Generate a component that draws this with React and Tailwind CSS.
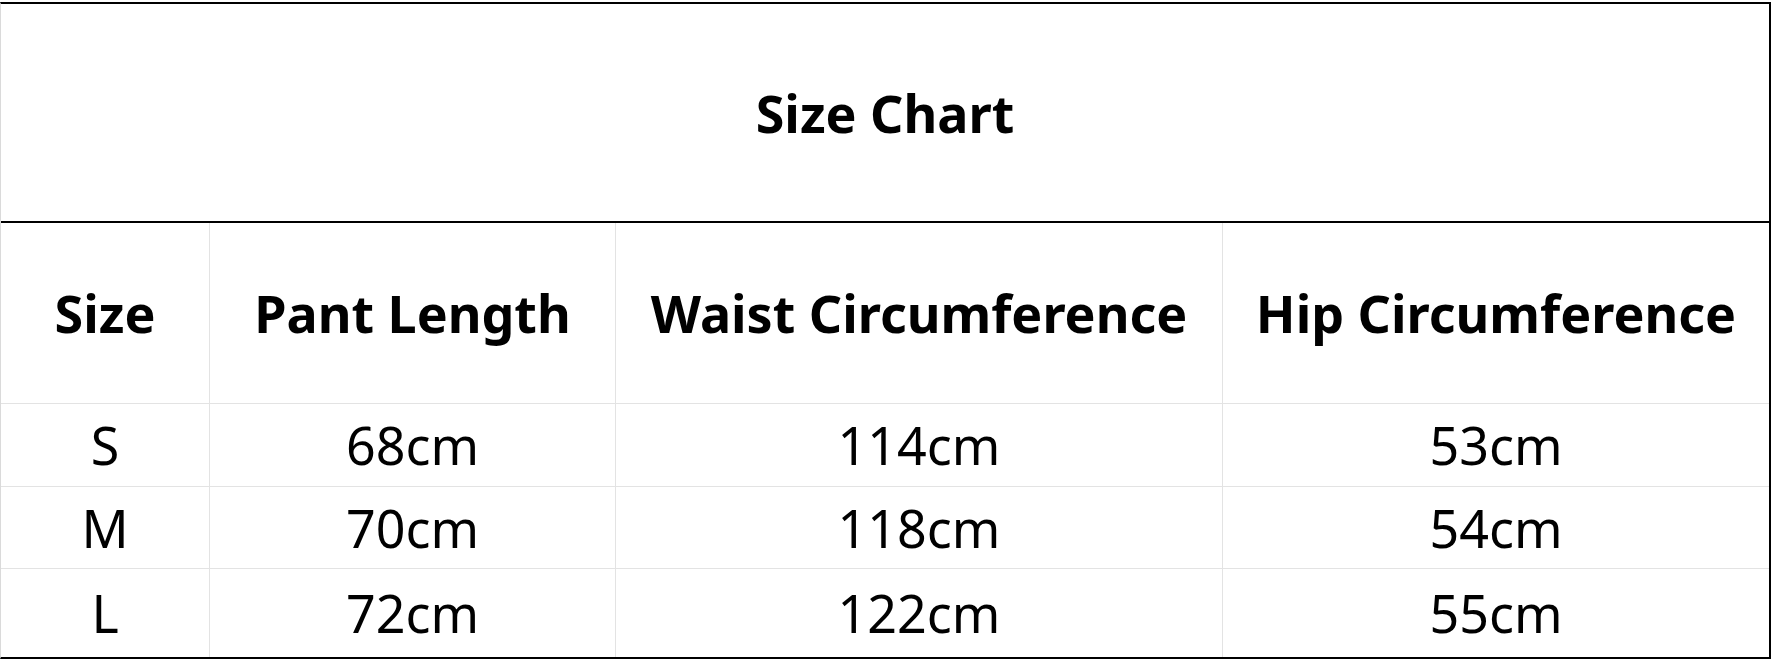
import React from "react";

const columns = ["Size", "Pant Length", "Waist Circumference", "Hip Circumference"];

const rows = [
    { size: "S", pant: "68cm", waist: "114cm", hip: "53cm", h: "h-[83px]" },
    { size: "M", pant: "70cm", waist: "118cm", hip: "54cm", h: "h-[82px]" },
    { size: "L", pant: "72cm", waist: "122cm", hip: "55cm", h: "h-[88px]" },
];

const widths = ["w-[209px]", "w-[406px]", "w-[607px]", "w-[546px]"];

function App() {
    return (
        <div
            className="min-h-screen bg-white pt-[2px] text-black"
            style={{ fontFamily: '"Noto Sans", "Open Sans", sans-serif' }}
        >
            <div className="w-[1771px] border-t-2 border-r-2 border-b-2 border-l border-black border-l-[#dadada]">
                {/* Title */}
                <div className="flex h-[219px] items-center justify-center border-b-2 border-black text-[52px] font-bold">
                    Size Chart
                </div>

                {/* Column headers */}
                <div className="flex h-[181px] border-b border-[#e3e3e3]">
                    {columns.map((col, i) => (
                        <div
                            key={col}
                            className={`flex items-center justify-center text-[52px] font-bold ${widths[i]} ${
                                i < 3 ? "border-r border-[#e3e3e3]" : ""
                            }`}
                        >
                            {col}
                        </div>
                    ))}
                </div>

                {/* Data rows */}
                {rows.map((row, r) => (
                    <div
                        key={row.size}
                        className={`flex ${row.h} ${r < rows.length - 1 ? "border-b border-[#e3e3e3]" : ""}`}
                    >
                        {[row.size, row.pant, row.waist, row.hip].map((val, i) => (
                            <div
                                key={i}
                                className={`flex items-center justify-center text-[52px] ${widths[i]} ${
                                    i < 3 ? "border-r border-[#e3e3e3]" : ""
                                }`}
                            >
                                {val}
                            </div>
                        ))}
                    </div>
                ))}
            </div>
        </div>
    );
}

export default App;
